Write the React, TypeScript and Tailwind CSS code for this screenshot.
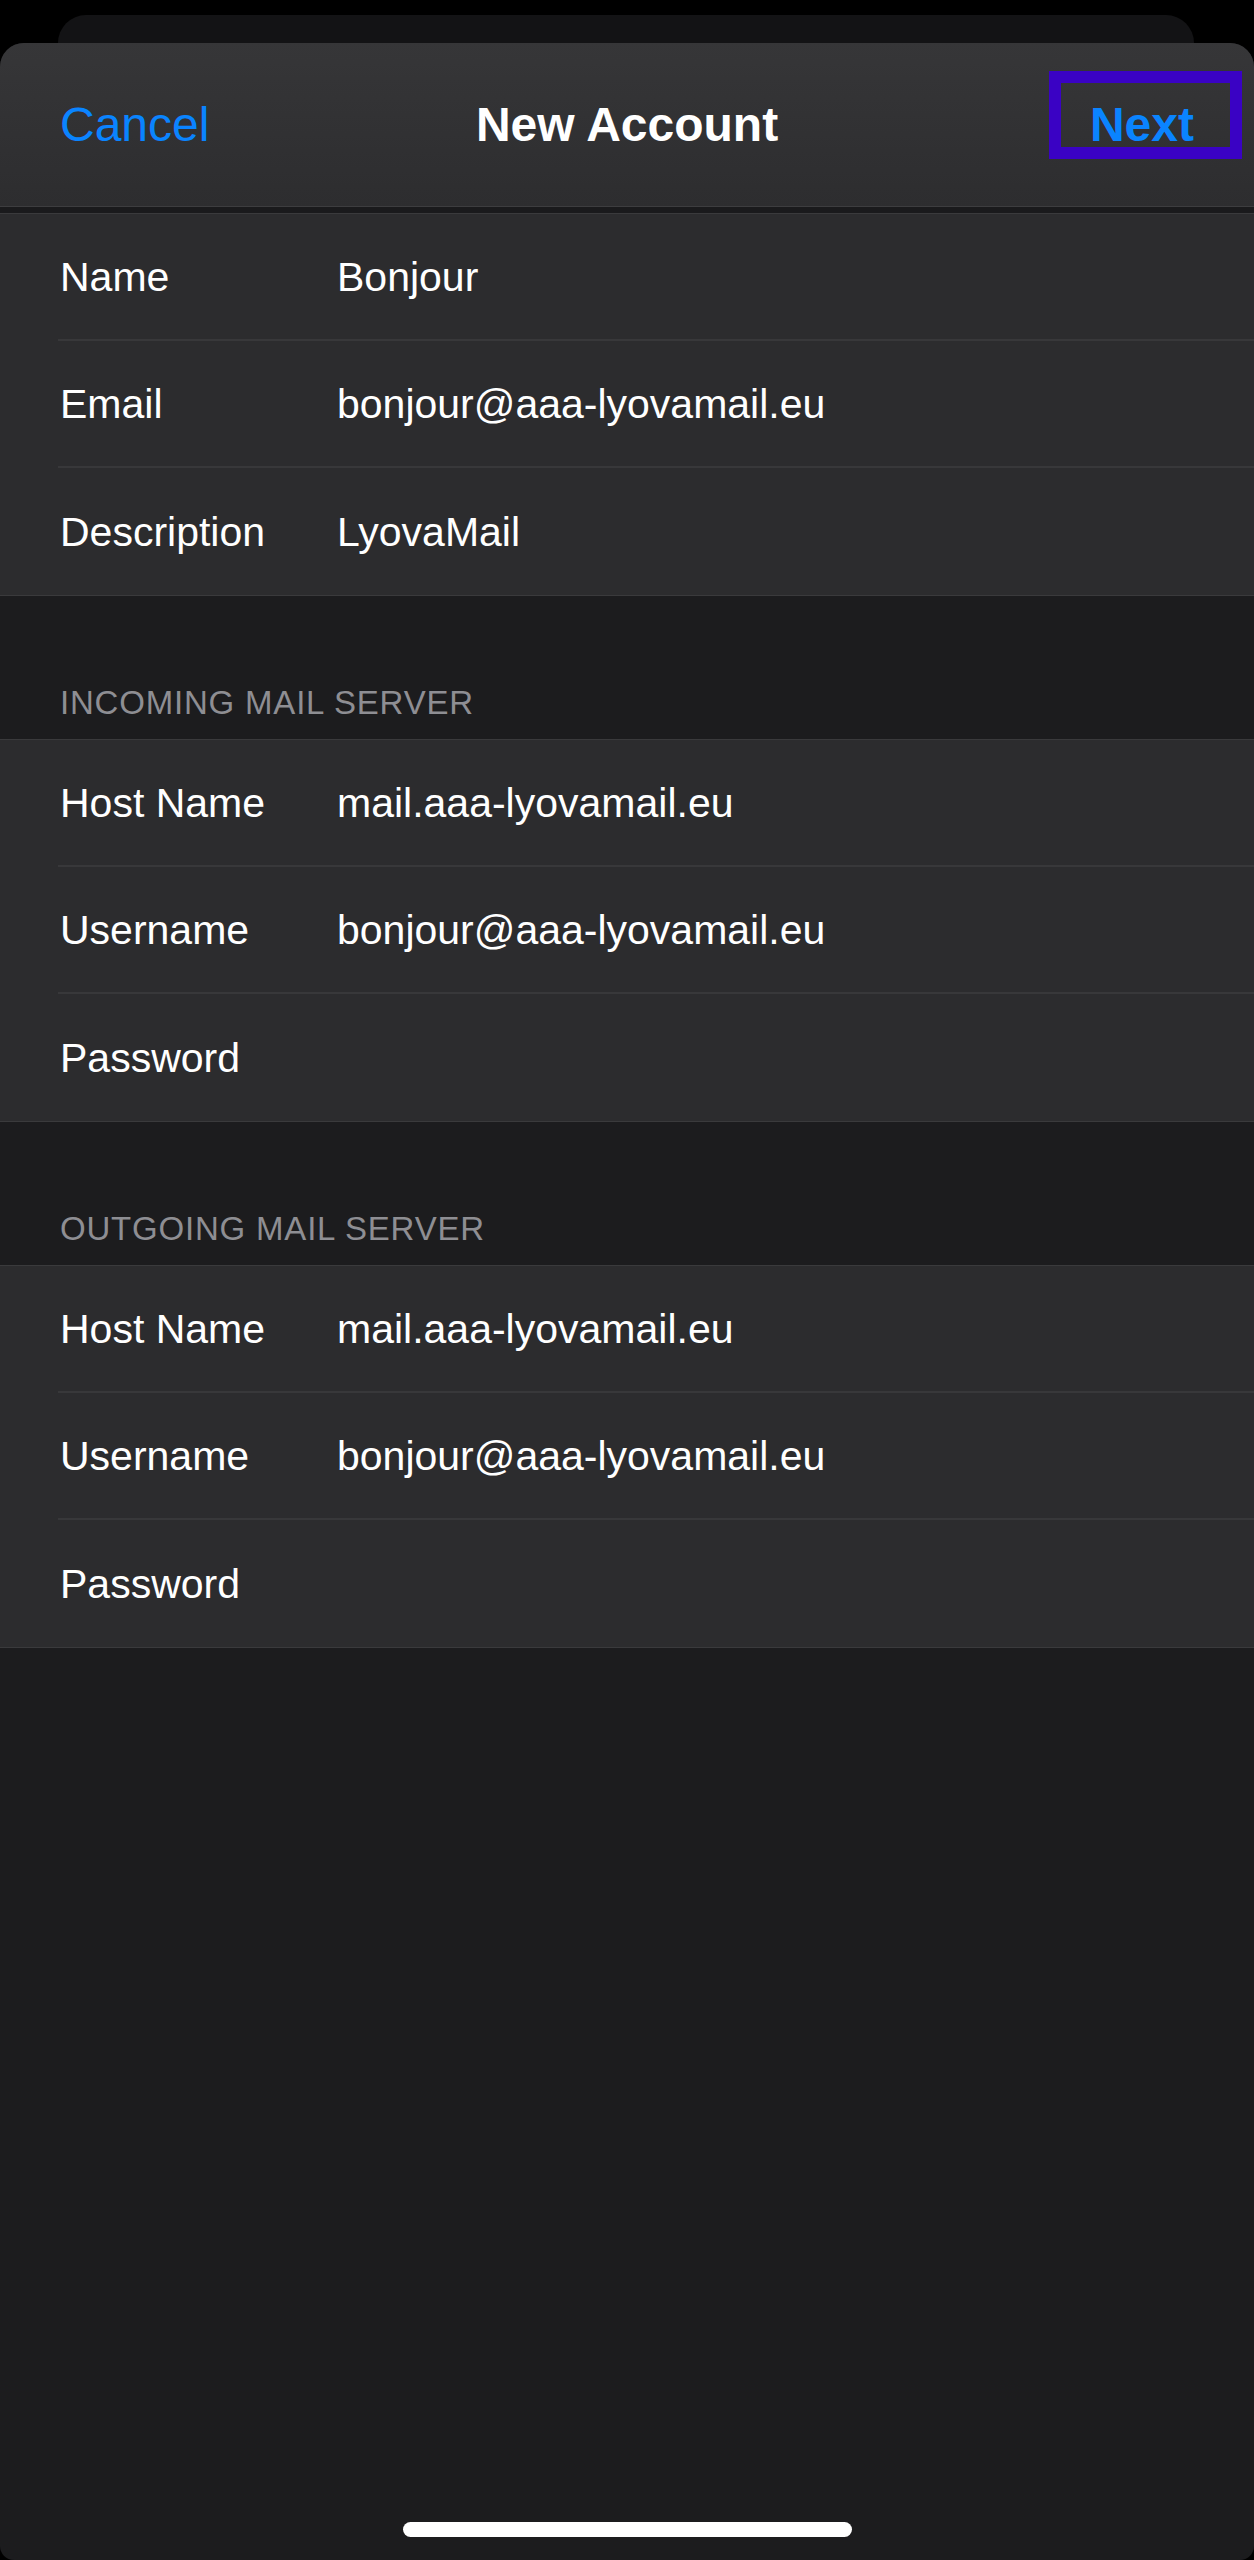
import React from 'react';

type Row = { label: string; value?: string };

const ACCOUNT: Row[] = [
  { label: 'Name', value: 'Bonjour' },
  { label: 'Email', value: 'bonjour@aaa-lyovamail.eu' },
  { label: 'Description', value: 'LyovaMail' },
];

const INCOMING: Row[] = [
  { label: 'Host Name', value: 'mail.aaa-lyovamail.eu' },
  { label: 'Username', value: 'bonjour@aaa-lyovamail.eu' },
  { label: 'Password' },
];

const OUTGOING: Row[] = [
  { label: 'Host Name', value: 'mail.aaa-lyovamail.eu' },
  { label: 'Username', value: 'bonjour@aaa-lyovamail.eu' },
  { label: 'Password' },
];

function Group({ rows }: { rows: Row[] }) {
  return (
    <div className="bg-[#2c2c2e] border-y border-[#3a3a3c]">
      {rows.map((row, i) => (
        <div key={row.label} className="pl-[58px]">
          <div
            className={`flex items-center h-[127px] pr-[60px] pt-[2px] ${
              i < rows.length - 1 ? 'border-b-2 border-[#38383a]' : ''
            }`}
          >
            <span className="w-[279px] pl-[2px] text-white text-[41px] leading-none">{row.label}</span>
            {row.value && <span className="text-white text-[41px] leading-none">{row.value}</span>}
          </div>
        </div>
      ))}
    </div>
  );
}

function SectionHeader({ title }: { title: string }) {
  return (
    <div className="h-[143px] flex items-end pl-[60px] pb-[20px]">
      <span className="text-[#8e8e93] text-[33px] leading-none tracking-[0.8px]">{title}</span>
    </div>
  );
}

export default function App() {
  return (
    <div
      className="w-[1254px] h-[2560px] bg-black flex flex-col pt-[15px]"
      style={{ fontFamily: '"Liberation Sans", Arial, sans-serif' }}
    >
      {/* card behind the sheet */}
      <div className="ml-[58px] w-[1136px] h-[28px] rounded-t-[28px] bg-[#131315]" />

      <div className="flex-1 flex flex-col bg-[#1c1c1e] rounded-t-[24px] rounded-b-[14px] overflow-hidden">
        <div className="relative h-[164px] grid grid-cols-[1fr_auto_1fr] items-center px-[60px] bg-linear-to-b from-[#363638] to-[#2d2d2f] border-b border-[#3d3d3f]">
          <span className="justify-self-start text-[#0a84ff] text-[48px] leading-none">Cancel</span>
          <span className="text-white text-[48px] font-bold leading-none">New Account</span>
          <span className="justify-self-end text-[#0a84ff] text-[48px] font-bold leading-none">Next</span>
          <div className="absolute left-[1049px] top-[28px] w-[193px] h-[88px] border-[12px] border-[#3a02c4]" />
        </div>

        <div className="h-[6px] bg-[#1a1a1c]" />

        <Group rows={ACCOUNT} />
        <SectionHeader title="INCOMING MAIL SERVER" />
        <Group rows={INCOMING} />
        <SectionHeader title="OUTGOING MAIL SERVER" />
        <Group rows={OUTGOING} />

        <div className="flex-1 flex flex-col justify-end items-center pb-[23px]">
          <div className="w-[449px] h-[15px] rounded-full bg-white" />
        </div>
      </div>
    </div>
  );
}
